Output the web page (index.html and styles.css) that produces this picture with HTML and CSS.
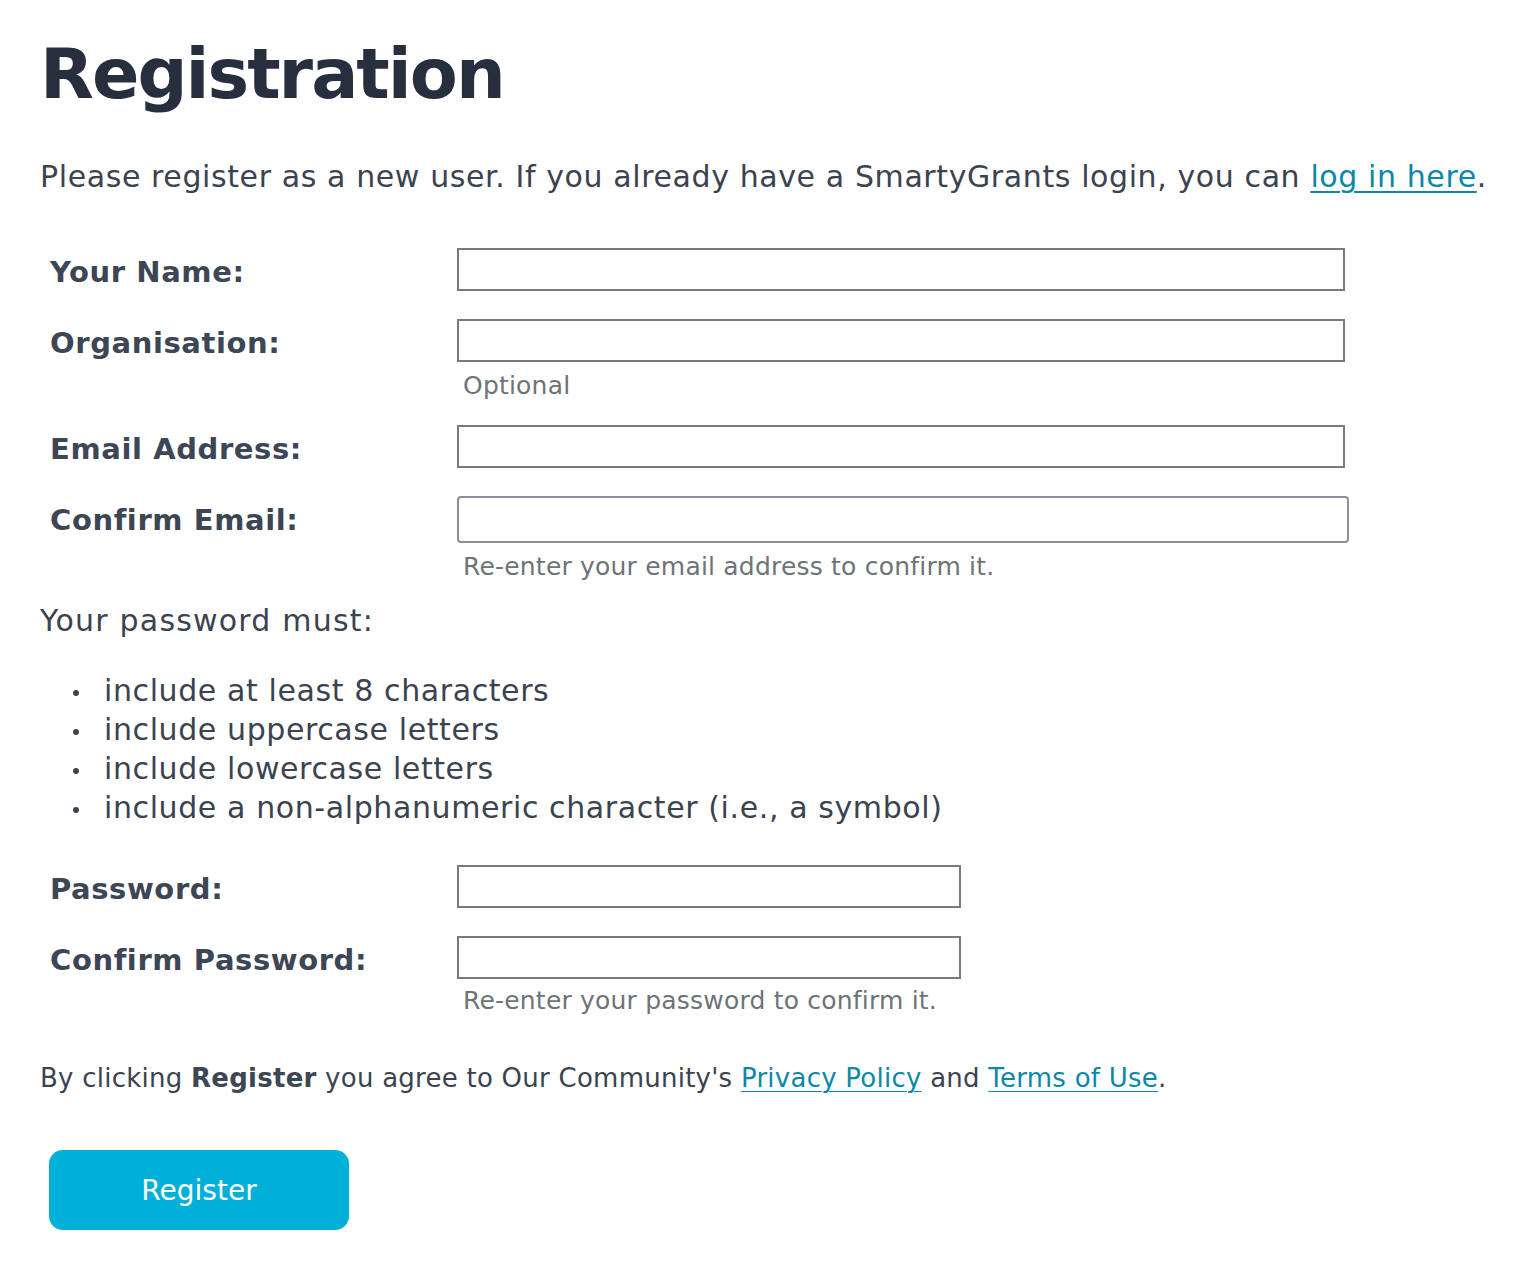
FILE: index.html
```html
<!DOCTYPE html>
<html lang="en">
<head>
<meta charset="utf-8">
<title>Registration</title>
<link rel="stylesheet" href="styles.css">
</head>
<body>
<main class="page">
  <h1 class="title">Registration</h1>
  <p class="intro">Please register as a new user. If you already have a SmartyGrants login, you can <a href="#" class="link">log in here</a>.</p>

  <form class="form">
    <div class="row">
      <label class="label" for="name">Your Name:</label>
      <div class="field"><input id="name" class="input wide" type="text"></div>
    </div>
    <div class="row">
      <label class="label" for="org">Organisation:</label>
      <div class="field"><input id="org" class="input wide" type="text"><div class="hint hint-org">Optional</div></div>
    </div>
    <div class="row">
      <label class="label" for="email">Email Address:</label>
      <div class="field"><input id="email" class="input wide" type="text"></div>
    </div>
    <div class="row">
      <label class="label" for="email2">Confirm Email:</label>
      <div class="field"><input id="email2" class="input wide alt" type="text"><div class="hint">Re-enter your email address to confirm it.</div></div>
    </div>

    <p class="pw-intro">Your password must:</p>
    <ul class="rules">
      <li>include at least 8 characters</li>
      <li>include uppercase letters</li>
      <li>include lowercase letters</li>
      <li>include a non-alphanumeric character (i.e., a symbol)</li>
    </ul>

    <div class="row">
      <label class="label" for="pw">Password:</label>
      <div class="field"><input id="pw" class="input narrow" type="password"></div>
    </div>
    <div class="row">
      <label class="label" for="pw2">Confirm Password:</label>
      <div class="field"><input id="pw2" class="input narrow" type="password"><div class="hint hint-pw">Re-enter your password to confirm it.</div></div>
    </div>

    <p class="agree">By clicking <strong>Register</strong> you agree to Our Community's <a href="#" class="link">Privacy Policy</a> and <a href="#" class="link">Terms of Use</a>.</p>

    <button type="button" class="btn">Register</button>
  </form>
</main>
</body>
</html>
```

FILE: styles.css
```css
* { box-sizing: border-box; }
html, body { margin: 0; padding: 0; background: #ffffff; }
body {
  font-family: "DejaVu Sans", "Noto Sans", sans-serif;
  color: #3b4350;
}
.page { padding: 0 0 40px 40px; }

.title {
  margin: 29px 0 0 0;
  font-size: 70px;
  line-height: 90px;
  font-weight: 700;
  color: #272f3f;
  letter-spacing: -2px;
}

.intro {
  margin: 38px 0 0 0;
  font-size: 30px;
  line-height: 40px;
  letter-spacing: 0.6px;
  color: #3b4350;
}

.link { color: #0b87a7; text-decoration: underline; text-underline-offset: 4px; text-decoration-thickness: 2px; }
.agree .link { text-decoration-thickness: 1px; }

.form { margin-top: 51px; }

.row {
  display: grid;
  grid-template-columns: 407px 1fr;
  align-items: start;
  padding-left: 10px;
  margin-bottom: 28px;
}

.label {
  font-size: 29px;
  line-height: 36px;
  padding-top: 6px;
  letter-spacing: 0.6px;
  font-weight: 700;
  color: #3d4654;
}

.input {
  display: block;
  height: 43px;
  border: 2px solid #7a7a7a;
  border-radius: 0;
  background: #fff;
  padding: 0 8px;
  font-family: inherit;
  font-size: 22px;
}
.wide { width: 888px; }
.narrow { width: 504px; }
.alt { width: 892px; height: 47px; border: 2px solid #8e8e9a; border-radius: 4px; }

.hint {
  margin: 8px 0 0 6px;
  font-size: 25px;
  line-height: 32px;
  letter-spacing: 0.2px;
  color: #6e7378;
}
.hint-org { margin-bottom: -5px; }
.hint-pw { margin-top: 6px; }

.pw-intro {
  margin: -10px 0 0 0;
  font-size: 30px;
  line-height: 40px;
  letter-spacing: 1.2px;
}

.rules {
  list-style: none;
  margin: 30px 0 38px 0;
  padding-left: 64px;
  font-size: 30px;
  line-height: 39px;
  letter-spacing: 0.6px;
}
.rules li { position: relative; }
.rules li::before {
  content: "";
  position: absolute;
  left: -31px;
  top: 19px;
  width: 6px;
  height: 6px;
  border-radius: 50%;
  background: #3b4350;
}

.agree {
  margin: 43px 0 0 0;
  font-size: 26px;
  line-height: 36px;
  letter-spacing: 0.25px;
}
.agree strong { color: #3d4654; }

.btn {
  margin: 54px 0 0 9px;
  width: 300px;
  height: 80px;
  border: none;
  border-radius: 14px;
  background: #00b0d8;
  color: #ffffff;
  font-family: inherit;
  font-size: 28px;
  cursor: pointer;
}
```
